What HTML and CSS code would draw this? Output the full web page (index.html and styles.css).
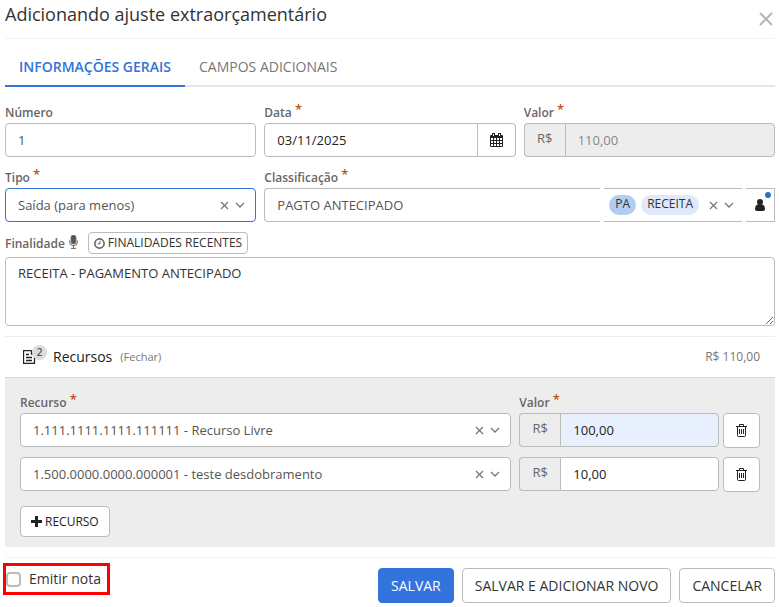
FILE: index.html
```html
<!DOCTYPE html>
<html lang="pt-BR">
<head>
    <meta charset="UTF-8">
    <meta name="viewport" content="width=device-width, initial-scale=1">
    <title>Adicionando ajuste extraorçamentário</title>
    <link rel="stylesheet" href="styles.css">
</head>
<body>
<form class="modal">
    <header class="modal-header">
        <h1>Adicionando ajuste extraorçamentário</h1>
        <button type="button" class="icon-button close" aria-label="Fechar">
            <svg width="14" height="14" viewBox="0 0 14 14"><path d="M1 1l12 12M13 1L1 13"/></svg>
        </button>
    </header>

    <nav class="tabs">
        <a href="#gerais" class="tab active">INFORMAÇÕES GERAIS</a>
        <a href="#adicionais" class="tab">CAMPOS ADICIONAIS</a>
    </nav>

    <div class="fields" id="gerais">
        <div class="field">
            <label for="numero">Número</label>
            <input class="control" id="numero" type="text" value="1">
        </div>
        <div class="field">
            <label for="data">Data <span class="required">*</span></label>
            <div class="input-group">
                <input class="control dark" id="data" type="text" value="03/11/2025">
                <button type="button" class="addon-button" aria-label="Abrir calendário">
                    <svg width="13" height="14" viewBox="0 0 13 14">
                        <path d="M0 3q0-1 1-1h11q1 0 1 1v10q0 1-1 1H1q-1 0-1-1z" fill="#222"/>
                        <path d="M2 0h3v4H2zM8 0h3v4H8z" fill="#222"/>
                        <path d="M3 1h1v2H3zM9 1h1v2H9zM1 5h2v2H1zM4 5h2v2H4zM7 5h2v2H7zM10 5h2v2h-2zM1 8h2v2H1zM4 8h2v2H4zM7 8h2v2H7zM10 8h2v2h-2zM1 11h2v2H1zM4 11h2v2H4zM7 11h2v2H7zM10 11h2v2h-2z" fill="#fff"/>
                    </svg>
                </button>
            </div>
        </div>
        <div class="field">
            <label for="valor">Valor <span class="required">*</span></label>
            <div class="input-group">
                <span class="prefix">R$</span>
                <input class="control" id="valor" type="text" value="110,00" disabled>
            </div>
        </div>

        <div class="field">
            <label for="tipo">Tipo <span class="required">*</span></label>
            <div class="select-box">
                <select class="control focused" id="tipo">
                    <option>Saída (para menos)</option>
                </select>
                <div class="select-icons">
                    <button type="button" class="icon-button" aria-label="Limpar tipo">
                        <svg width="9" height="9" viewBox="0 0 9 9"><path d="M1 1l7 7M8 1L1 8"/></svg>
                    </button>
                    <svg width="10" height="6" viewBox="0 0 10 6"><path d="M1 1l4 4 4-4"/></svg>
                </div>
            </div>
        </div>
        <div class="field wide">
            <label for="classificacao">Classificação <span class="required">*</span></label>
            <div class="classification">
                <input class="control" id="classificacao" type="text" value="PAGTO ANTECIPADO">
                <div class="chips">
                    <span class="chip strong">PA</span>
                    <span class="chip">RECEITA</span>
                    <div class="chip-icons">
                        <button type="button" class="icon-button" aria-label="Limpar classificação">
                            <svg width="9" height="9" viewBox="0 0 9 9"><path d="M1 1l7 7M8 1L1 8"/></svg>
                        </button>
                        <button type="button" class="icon-button" aria-label="Abrir lista">
                            <svg width="10" height="6" viewBox="0 0 10 6"><path d="M1 1l4 4 4-4"/></svg>
                        </button>
                    </div>
                </div>
                <button type="button" class="person" aria-label="Pessoa">
                    <svg width="10" height="12" viewBox="0 0 10 12"><path d="M5 0a3 3 0 0 1 3 3c0 1-.4 2-1 2.600C9 6 10 7.500 10 10c0 1.300-.8 2-2 2H2c-1.200 0-2-.7-2-2 0-2.500 1-4 3-4.400C2.400 5 2 4 2 3a3 3 0 0 1 3-3z" fill="#222"/></svg>
                    <span class="dot"></span>
                </button>
            </div>
        </div>
    </div>

    <div class="purpose">
        <div class="purpose-head">
            <label for="finalidade">Finalidade</label>
            <button type="button" class="icon-button" aria-label="Ditar">
                <svg width="9" height="14" viewBox="0 0 9 14">
                    <rect x="2" y="0" width="5" height="9" rx="2.500" fill="#555"/>
                    <path d="M.5 5.500v1.200a4 4 0 0 0 8 0V5.500M4.500 10.700v2.500M2 13.400h5" stroke="#666"/>
                </svg>
            </button>
            <button type="button" class="recent">
                <svg width="11" height="11" viewBox="0 0 11 11"><circle cx="5.500" cy="5.500" r="4.600" stroke-width="1.600"/><path d="M6 2.800v3H3.500"/></svg>
                FINALIDADES RECENTES
            </button>
        </div>
        <textarea class="control" id="finalidade">RECEITA - PAGAMENTO ANTECIPADO</textarea>
    </div>

    <section class="resources">
        <div class="resources-head">
            <span class="doc">
                <svg width="13" height="14" viewBox="0 0 13 14"><path d="M8.500.500H.500v13h11V5M8.500.500V4h2M3 4.500h3M3 7.500h6M3 10.500h6" stroke="#222" stroke-width="1.300"/></svg>
                <span class="count">2</span>
            </span>
            <h2>Recursos</h2>
            <a href="#recursos" class="toggle">(Fechar)</a>
            <span class="total">R$ 110,00</span>
        </div>
        <div class="panel" id="recursos">
            <div class="resource-row">
                <div class="field">
                    <label for="recurso-1">Recurso <span class="required">*</span></label>
                    <div class="select-box">
                        <select class="control" id="recurso-1">
                            <option>1.111.1111.1111.111111 - Recurso Livre</option>
                        </select>
                        <div class="select-icons">
                            <button type="button" class="icon-button" aria-label="Limpar recurso">
                                <svg width="9" height="9" viewBox="0 0 9 9"><path d="M1 1l7 7M8 1L1 8"/></svg>
                            </button>
                            <svg width="10" height="6" viewBox="0 0 10 6"><path d="M1 1l4 4 4-4"/></svg>
                        </div>
                    </div>
                </div>
                <div class="field">
                    <label for="valor-1">Valor <span class="required">*</span></label>
                    <div class="input-group">
                        <span class="prefix">R$</span>
                        <input class="control dark filled" id="valor-1" type="text" value="100,00">
                    </div>
                </div>
                <button type="button" class="btn trash" aria-label="Excluir recurso">
                    <svg width="11" height="13" viewBox="0 0 11 13"><path d="M0 2.500h11M3.500 2.500v-2h4v2M1.500 3v8.500q0 1 1 1h6q1 0 1-1V3M3.500 5v5M5.500 5v5M7.500 5v5"/></svg>
                </button>
            </div>
            <div class="resource-row">
                <div class="select-box">
                    <select class="control" aria-label="Recurso">
                        <option>1.500.0000.0000.000001 - teste desdobramento</option>
                    </select>
                    <div class="select-icons">
                        <button type="button" class="icon-button" aria-label="Limpar recurso">
                            <svg width="9" height="9" viewBox="0 0 9 9"><path d="M1 1l7 7M8 1L1 8"/></svg>
                        </button>
                        <svg width="10" height="6" viewBox="0 0 10 6"><path d="M1 1l4 4 4-4"/></svg>
                    </div>
                </div>
                <div class="input-group">
                    <span class="prefix">R$</span>
                    <input class="control dark" type="text" value="10,00" aria-label="Valor">
                </div>
                <button type="button" class="btn trash" aria-label="Excluir recurso">
                    <svg width="11" height="13" viewBox="0 0 11 13"><path d="M0 2.500h11M3.500 2.500v-2h4v2M1.500 3v8.500q0 1 1 1h6q1 0 1-1V3M3.500 5v5M5.500 5v5M7.500 5v5"/></svg>
                </button>
            </div>
            <button type="button" class="btn add">
                <svg width="11" height="11" viewBox="0 0 11 11"><path d="M5.500 0v11M0 5.500h11" stroke="#222" stroke-width="3"/></svg>
                RECURSO
            </button>
        </div>
    </section>

    <footer class="modal-footer">
        <label class="emit" for="emitir">
            <input type="checkbox" id="emitir">
            Emitir nota
        </label>
        <div class="actions">
            <button type="submit" class="btn primary">SALVAR</button>
            <button type="button" class="btn">SALVAR E ADICIONAR NOVO</button>
            <button type="button" class="btn">CANCELAR</button>
        </div>
    </footer>
</form>
</body>
</html>
```

FILE: styles.css
```css
* {
    box-sizing: border-box;
}

body {
    margin: 0;
    background: #fff;
    color: #333;
    font-family: "Open Sans", "Noto Sans", sans-serif;
    font-size: 13px;
    line-height: 20px;
}

button,
input,
select,
textarea {
    font: inherit;
    color: inherit;
}

button {
    cursor: pointer;
}

svg {
    display: block;
    flex: none;
    fill: none;
    stroke: #777;
}

.modal {
    padding: 0 4px 0 5px;
}

.modal-header {
    display: flex;
    justify-content: space-between;
    height: 39px;
    border-bottom: 1px solid #f3f3f3;
}

h1 {
    margin: 0;
    font-size: 18px;
    font-weight: 400;
    line-height: 28px;
}

.icon-button {
    padding: 0;
    border: 0;
    background: none;
}

.close {
    padding: 0 2px;
}

.close svg {
    stroke: #b5b5b5;
    stroke-width: 2;
}

/* tabs */
.tabs {
    display: flex;
    height: 48px;
    padding-top: 8px;
    border-bottom: 2px solid #e5e7e7;
}

.tab {
    height: 40px;
    padding: 0 14px;
    font-size: 14px;
    line-height: 40px;
    color: #777;
    text-decoration: none;
}

.tab.active {
    color: #3273dc;
    font-weight: 600;
    border-bottom: 2px solid #3273dc;
}

/* fields */
.fields {
    display: grid;
    grid-template-columns: repeat(3, minmax(0, 1fr));
    gap: 11px 8px;
    padding-top: 16px;
}

.field {
    min-width: 0;
}

.wide {
    grid-column: span 2;
}

.field label,
.purpose label {
    display: block;
    height: 20px;
    font-size: 12px;
    font-weight: 600;
    color: #666;
}

.required {
    font-size: 13px;
    line-height: 12px;
    vertical-align: 3px;
    color: #c0501c;
}

.control {
    display: block;
    width: 100%;
    height: 34px;
    padding: 0 12px;
    border: 1px solid #bbb;
    border-radius: 4px;
    outline: 0;
    background: #fff;
    color: #555;
}

.control.dark {
    color: #222;
}

.control.filled {
    background: #e8f0fe;
}

.control.focused {
    border-color: #3273dc;
}

.control:disabled {
    background: #ededed;
    color: #888;
}

select.control {
    appearance: none;
    padding-right: 40px;
}

.input-group {
    display: flex;
}

.input-group .control {
    flex: 1;
    min-width: 0;
}

.input-group .control:first-child {
    border-radius: 4px 0 0 4px;
}

.input-group .control:last-child {
    border-radius: 0 4px 4px 0;
}

.addon-button {
    display: grid;
    place-items: center;
    width: 38px;
    height: 34px;
    padding: 0;
    border: 1px solid #bbb;
    border-left: 0;
    border-radius: 0 4px 4px 0;
    background: #fff;
}

.addon-button svg {
    stroke: none;
}

.prefix {
    width: 41px;
    height: 34px;
    border: 1px solid #bbb;
    border-right: 0;
    border-radius: 4px 0 0 4px;
    background: #ededed;
    color: #666;
    line-height: 28px;
    text-align: center;
}

.select-box {
    position: relative;
}

.select-icons {
    position: absolute;
    top: 0;
    right: 11px;
    display: flex;
    align-items: center;
    gap: 6px;
    height: 34px;
    pointer-events: none;
}

.select-icons button {
    pointer-events: auto;
}

.select-icons svg,
.chip-icons svg {
    stroke-width: 1.25;
}

/* classification */
.classification {
    display: flex;
    gap: 4px;
}

.classification > .control {
    flex: 1;
    min-width: 0;
    border-right: 0;
    border-radius: 4px 0 0 4px;
}

.chips {
    display: flex;
    gap: 5px;
    height: 34px;
    padding: 6px 8px 0 5px;
    border: solid #bbb;
    border-width: 1px 0;
}

.chip {
    height: 20px;
    padding: 0 6px;
    border-radius: 10px;
    background: #dfe9fa;
    font-size: 12px;
    line-height: 18px;
    color: #333;
}

.chip.strong {
    background: #b1cdf2;
}

.chip-icons {
    display: flex;
    align-items: center;
    gap: 6px;
    height: 20px;
    padding-left: 5px;
}

.person {
    position: relative;
    display: grid;
    place-items: center;
    width: 29px;
    height: 34px;
    padding: 0;
    border: 1px solid #bbb;
    border-left: 0;
    background: #fff;
}

.person svg {
    stroke: none;
}

.dot {
    position: absolute;
    top: 3px;
    right: 3px;
    width: 6px;
    height: 6px;
    border-radius: 50%;
    background: #2b6fc9;
}

/* purpose */
.purpose {
    padding-top: 10px;
}

.purpose-head {
    display: flex;
    gap: 4px;
    height: 25px;
}

.purpose .purpose-head label {
    line-height: 24px;
}

.purpose-head .icon-button {
    height: 20px;
}

.recent {
    display: flex;
    align-items: center;
    gap: 3px;
    height: 22px;
    margin-left: 6px;
    padding: 0 5px;
    border: 1px solid #bbb;
    border-radius: 4px;
    background: #fff;
    font-size: 12px;
}

.recent svg {
    stroke: #666;
}

textarea.control {
    height: 69px;
    padding: 5px 12px;
    color: #333;
    resize: both;
}

/* resources */
.resources {
    margin-top: 10px;
    border-top: 1px solid #eee;
}

.resources-head {
    display: flex;
    align-items: center;
    height: 40px;
    padding: 0 15px 0 18px;
}

.doc {
    position: relative;
    width: 30px;
}

.count {
    position: absolute;
    top: -5px;
    left: 9px;
    width: 15px;
    height: 15px;
    border-radius: 50%;
    background: #dcdcdc;
    font-size: 10px;
    font-weight: 600;
    line-height: 14px;
    text-align: center;
    color: #555;
}

h2 {
    margin: 0;
    font-size: 14px;
    font-weight: 400;
    color: #222;
}

.toggle {
    margin-left: 8px;
    font-size: 11px;
    color: #777;
    text-decoration: none;
}

.total {
    margin-left: auto;
    font-size: 12px;
    color: #777;
}

.panel {
    padding: 15px 15px 10px;
    border-top: 1px solid #d5d5d5;
    background: #ededed;
}

.resource-row {
    display: grid;
    grid-template-columns: 5fr 2fr 41px;
    align-items: end;
    margin-bottom: 9px;
}

.resource-row > :first-child {
    margin-right: 8px;
}

/* keeps the fields level with the top of the taller button */
.resource-row > :not(.btn) {
    margin-bottom: 1px;
}

.btn {
    height: 35px;
    padding: 0 12px;
    border: 1px solid #bbb;
    border-radius: 4px;
    background: #fff;
    font-size: 14px;
    line-height: 32px;
    white-space: nowrap;
}

.btn.primary {
    border-color: #3273dc;
    background: #3273dc;
    color: #fff;
    font-weight: 500;
}

.btn.trash {
    display: grid;
    place-items: center;
    margin-left: 4px;
    padding: 0;
}

.trash svg {
    stroke: #222;
}

.btn.add {
    display: flex;
    align-items: center;
    gap: 3px;
    height: 31px;
    margin-top: 14px;
    padding: 0 10px;
    font-size: 12px;
    line-height: 28px;
    color: #222;
}

/* footer */
.modal-footer {
    display: flex;
    justify-content: space-between;
    align-items: flex-start;
    margin-top: 10px;
    padding: 5px 0 4px;
    border-top: 1px solid #f3f3f3;
}

.emit {
    display: flex;
    align-items: center;
    gap: 8px;
    height: 32px;
    margin-left: -2px;
    padding-right: 6px;
    border: 3px solid #f00;
    font-size: 14px;
}

.emit input {
    appearance: none;
    width: 15px;
    height: 15px;
    margin: 0;
    border: 2px solid #bbb;
    border-radius: 4px;
}

.emit input:checked {
    background: #3273dc;
}

.actions {
    display: flex;
    gap: 8px;
    padding-top: 5px;
}
```
